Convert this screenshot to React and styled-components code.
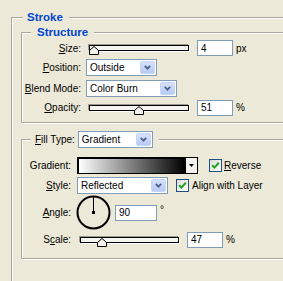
import React from 'react';
import styled, { createGlobalStyle } from 'styled-components';

const GlobalStyle = createGlobalStyle`
  html, body {
    margin: 0;
    padding: 0;
    background: #ece9d8;
  }
  body {
    font-family: "Liberation Sans", Arial, sans-serif;
    font-size: 10px;
    color: #000;
  }
`;

const Dialog = styled.div`
  width: 283px;
  height: 281px;
  overflow: hidden;
  box-sizing: border-box;
  padding: 11px 0 0 11px;
  background: #ece9d8;
`;

const Group = styled.fieldset`
  margin: ${p => p.$margin || '0'};
  padding: ${p => p.$padding || '0'};
  min-width: 0;
  width: ${p => p.$width || 'auto'};
  height: ${p => p.$height || 'auto'};
  box-sizing: border-box;
  border: 1px solid #aca899;
  box-shadow: inset 1px 1px 0 #fff, 1px 1px 0 #fff;
`;

const Caption = styled.legend`
  margin-left: ${p => p.$offset}px;
  padding: 0 6px 0 ${p => p.$padL}px;
  background: #ece9d8;
  font-size: 11.5px;
  font-weight: bold;
  line-height: 13px;
  color: #0046d5;
`;

const LegendRow = styled.span`
  display: flex;
  align-items: center;
  gap: 3px;
  font-size: 10px;
  font-weight: normal;
  color: #000;
  line-height: 17px;
`;

const Row = styled.div`
  display: flex;
  align-items: center;
  height: ${p => p.$h}px;
  margin-top: ${p => p.$mt || 0}px;
`;

const Label = styled.span`
  flex: none;
  width: ${p => p.$w}px;
  margin-right: ${p => p.$gap}px;
  text-align: right;
  white-space: nowrap;
`;

const Field = styled.input`
  flex: none;
  width: ${p => p.$w}px;
  height: 16px;
  margin: 0 0 0 ${p => p.$ml || 0}px;
  box-sizing: border-box;
  border: 1px solid #7f9db9;
  background: #fff;
  padding: 0 0 0 3px;
  font-family: inherit;
  font-size: 10px;
  color: #000;
  outline: none;
`;

const Unit = styled.span`
  margin-left: 3px;
  align-self: ${p => (p.$raised ? 'flex-start' : 'auto')};
  margin-top: ${p => (p.$raised ? '9px' : '0')};
`;

const SelectBox = styled.div`
  flex: none;
  display: flex;
  align-items: center;
  width: ${p => p.$w}px;
  height: 17px;
  box-sizing: border-box;
  border: 1px solid #7f9db9;
  background: #fff;
  padding: 1px;
`;

const SelectText = styled.span`
  flex: 1;
  padding-left: 2px;
  line-height: 13px;
  white-space: nowrap;
`;

const SelectButton = styled.span`
  flex: none;
  display: flex;
  align-items: center;
  justify-content: center;
  width: 15px;
  height: 13px;
  box-sizing: border-box;
  border: 1px solid #c6d5fa;
  border-radius: 2px;
  background: linear-gradient(#d6e1fc, #b7caf6);
`;

const SliderWrap = styled.div`
  flex: none;
  position: relative;
  padding: 0 3px;
`;

const Track = styled.div`
  width: ${p => p.$w}px;
  height: 6px;
  box-sizing: border-box;
  border: 1px solid #000;
  background: #f6f5f0;
  box-shadow: -1px -1px 0 #9d9a8c, 1px 1px 0 #fff;
`;

const ThumbMark = styled.svg`
  position: absolute;
  top: 1px;
  display: block;
`;

const GradientBox = styled.div`
  flex: none;
  display: flex;
  width: 121px;
  height: 17px;
  box-sizing: border-box;
  border: 1px solid #000;
  box-shadow: inset 1px 1px 0 #000;
`;

const GradientFill = styled.div`
  flex: 1;
  margin: 1px 0 0 1px;
  background: linear-gradient(to right, #ffffff, #000000);
`;

const GradientArrow = styled.div`
  flex: none;
  display: flex;
  align-items: center;
  justify-content: center;
  width: 11px;
  border-left: 1px solid #000;
  background: #f3f2ec;
`;

const CheckBox = styled.span`
  flex: none;
  display: flex;
  align-items: center;
  justify-content: center;
  width: 13px;
  height: 13px;
  box-sizing: border-box;
  margin-left: ${p => p.$ml}px;
  border: 1px solid #1c5180;
  background: linear-gradient(135deg, #dcdcd7, #ffffff);
`;

const CheckLabel = styled.span`
  margin-left: ${p => p.$ml}px;
  white-space: nowrap;
`;

const Dial = styled.svg`
  flex: none;
  display: block;
  margin-left: -1px;
`;

const Chevron = () => (
  <svg width="7" height="5" viewBox="0 0 7 5">
    <path d="M0.8 0.8 L3.5 3.6 L6.2 0.8" fill="none" stroke="#4d6185" strokeWidth="1.8" />
  </svg>
);

const Select = ({ w, value }) => (
  <SelectBox $w={w}>
    <SelectText>{value}</SelectText>
    <SelectButton>
      <Chevron />
    </SelectButton>
  </SelectBox>
);

const Slider = ({ w, pos }) => (
  <SliderWrap>
    <Track $w={w} />
    <ThumbMark width="10" height="9" viewBox="0 0 10 9" style={{ left: 2 + Math.round(pos * (w - 9)) }}>
      <path d="M0.5 4.5 L5 0.5 L9.5 4.5 V8.5 H0.5 Z" fill="#f4f3ee" stroke="#000" />
    </ThumbMark>
  </SliderWrap>
);

const Check = ({ ml }) => (
  <CheckBox $ml={ml}>
    <svg width="9" height="9" viewBox="0 0 9 9">
      <path d="M1.2 4.2 L3.4 6.6 L7.8 1.8" fill="none" stroke="#21a121" strokeWidth="2" />
    </svg>
  </CheckBox>
);

export default function App() {
  return (
    <>
      <GlobalStyle />
      <Dialog>
        <Group $width="300px" $height="300px" $padding="2px 0 0 9px">
          <Caption $offset={2} $padL={4}>Stroke</Caption>

          <Group $padding="0 0 5px 0">
            <Caption $offset={9} $padL={6}>Structure</Caption>
            <Row $h={18}>
              <Label $w={59} $gap={5}><u>S</u>ize:</Label>
              <Slider w={100} pos={0.01} />
              <Field $w={36} $ml={5} defaultValue="4" readOnly />
              <Unit>px</Unit>
            </Row>
            <Row $h={21}>
              <Label $w={59} $gap={5}><u>P</u>osition:</Label>
              <Select w={71} value="Outside" />
            </Row>
            <Row $h={20}>
              <Label $w={59} $gap={5}><u>B</u>lend Mode:</Label>
              <Select w={91} value="Color Burn" />
            </Row>
            <Row $h={19}>
              <Label $w={59} $gap={5}><u>O</u>pacity:</Label>
              <Slider w={100} pos={0.51} />
              <Field $w={36} $ml={5} defaultValue="51" readOnly />
              <Unit>%</Unit>
            </Row>
          </Group>

          <Group $margin="8px 0 0 0" $padding="8px 0 11px 0">
            <Caption $offset={9} $padL={4}>
              <LegendRow>
                <span><u>F</u>ill Type:</span>
                <Select w={75} value="Gradient" />
              </LegendRow>
            </Caption>
            <Row $h={18}>
              <Label $w={49} $gap={6}>Gradient:</Label>
              <GradientBox>
                <GradientFill />
                <GradientArrow>
                  <svg width="5" height="3" viewBox="0 0 5 3">
                    <path d="M0 0 H5 L2.5 3 Z" fill="#000" />
                  </svg>
                </GradientArrow>
              </GradientBox>
              <Check ml={11} />
              <CheckLabel $ml={2}><u>R</u>everse</CheckLabel>
            </Row>
            <Row $h={17} $mt={3}>
              <Label $w={49} $gap={6}><u>S</u>tyle:</Label>
              <Select w={91} value="Reflected" />
              <Check ml={8} />
              <CheckLabel $ml={3}>Align with Layer</CheckLabel>
            </Row>
            <Row $h={35} $mt={1}>
              <Label $w={49} $gap={6}><u>A</u>ngle:</Label>
              <Dial width="35" height="35" viewBox="0 0 35 35">
                <circle cx="17.5" cy="17.5" r="16" fill="none" stroke="#000" strokeWidth="2" />
                <line x1="17.5" y1="17.5" x2="17.5" y2="2" stroke="#000" strokeWidth="1" />
                <rect x="16" y="16" width="3" height="3" fill="#000" />
              </Dial>
              <Field $w={42} $ml={4} defaultValue="90" readOnly />
              <Unit $raised>°</Unit>
            </Row>
            <Row $h={15} $mt={2}>
              <Label $w={49} $gap={6}>S<u>c</u>ale:</Label>
              <Slider w={99} pos={0.2} />
              <Field $w={36} $ml={5} defaultValue="47" readOnly />
              <Unit>%</Unit>
            </Row>
          </Group>
        </Group>
      </Dialog>
    </>
  );
}
